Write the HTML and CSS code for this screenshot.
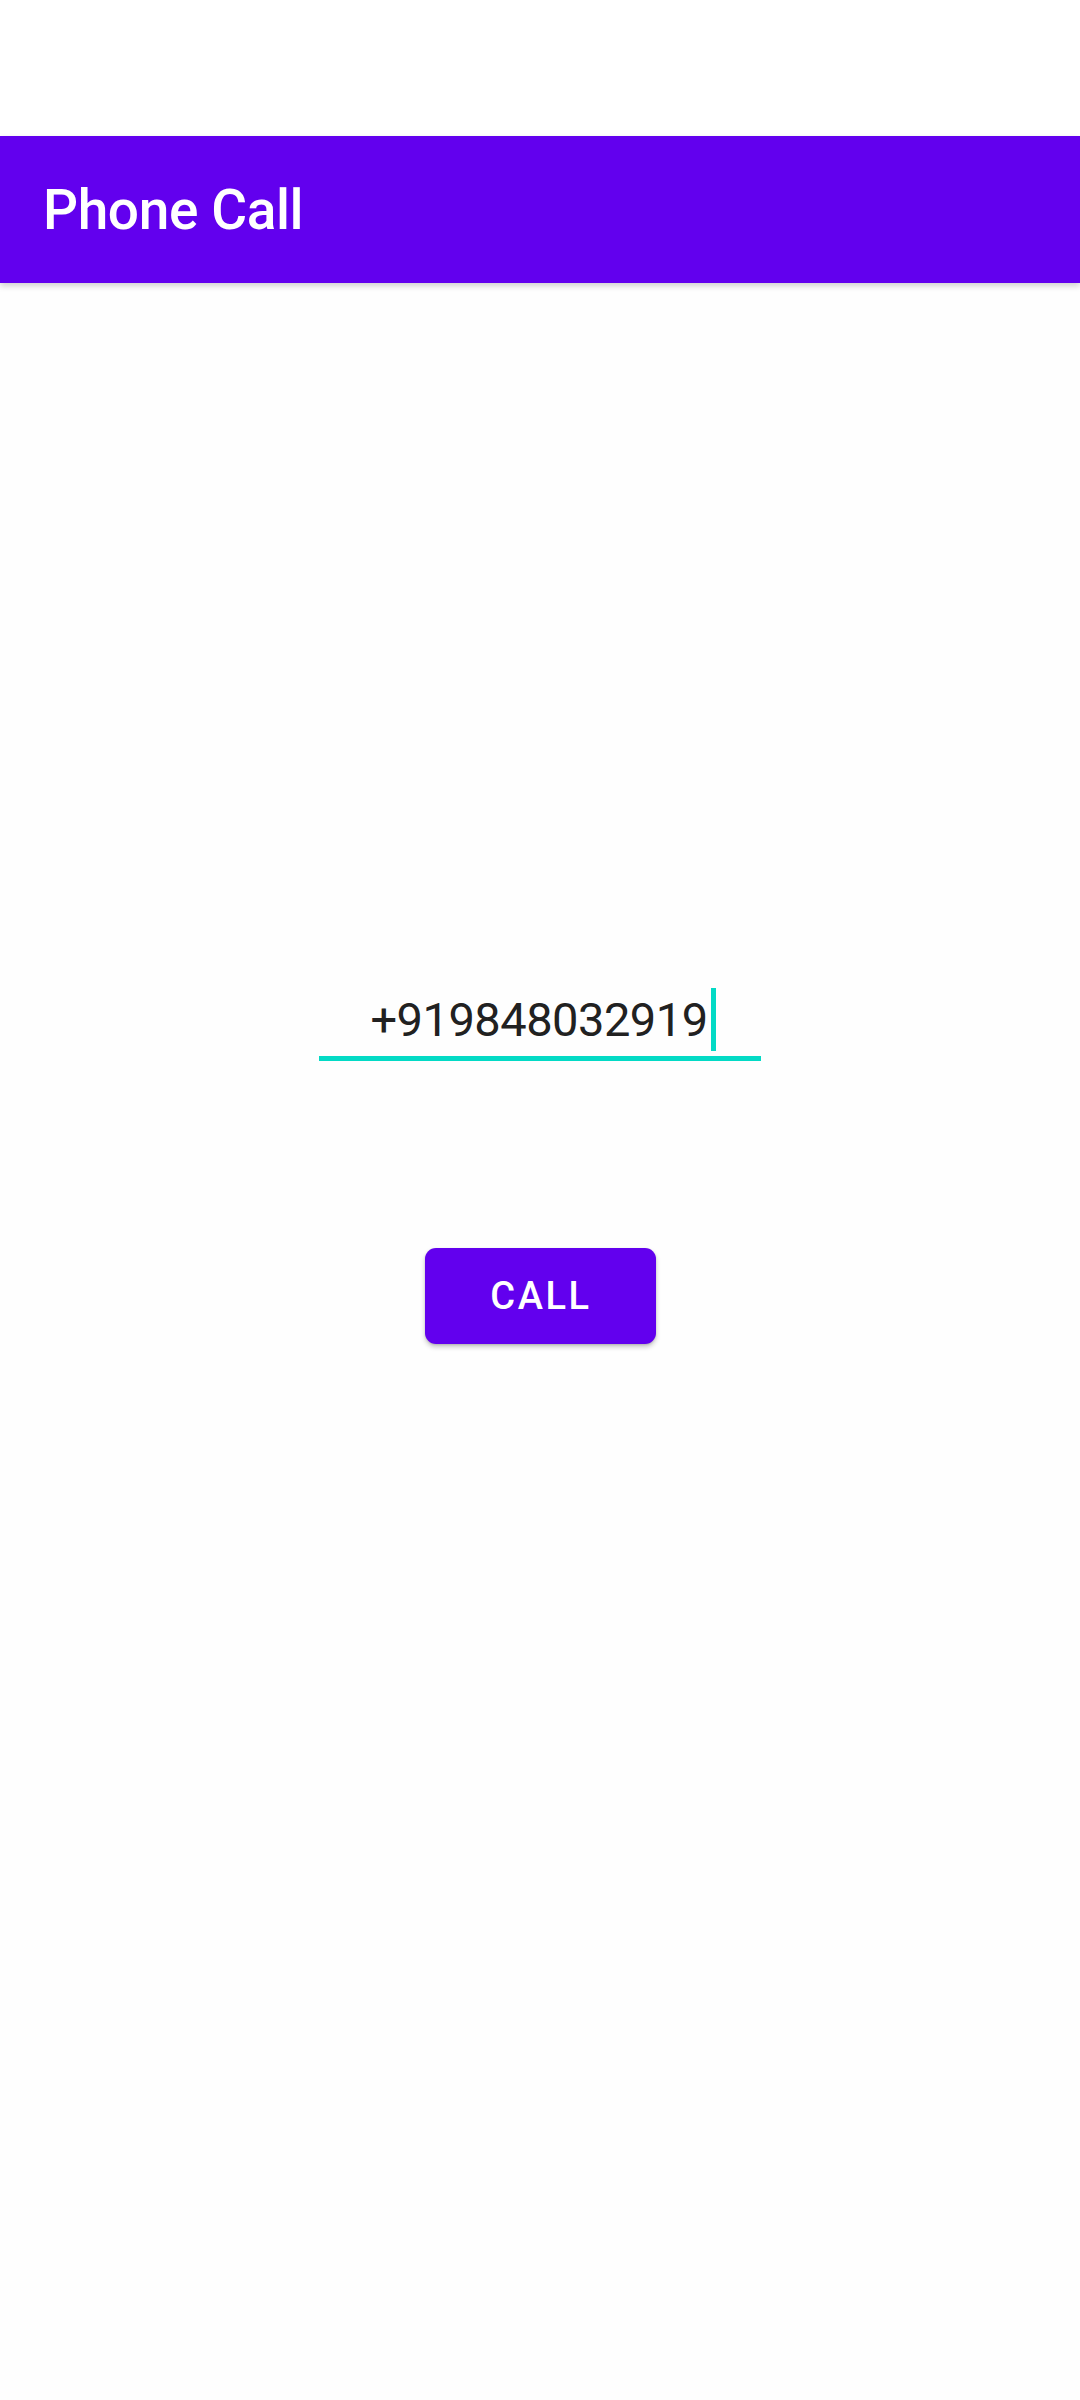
FILE: index.html
```html
<!DOCTYPE html>
<html>
<head>
<meta charset="utf-8">
<link rel="stylesheet" href="styles.css">
</head>
<body>
<div class="status"></div>
<header class="appbar"><span class="title">Phone Call</span></header>
<main class="content">
  <div class="field"><span class="value">+919848032919</span><span class="cursor"></span></div>
  <button class="call">CALL</button>
</main>
</body>
</html>
```
FILE: styles.css
```css
html, body {
  margin: 0;
  padding: 0;
  background: #ffffff;
  font-family: Roboto, "Noto Sans", sans-serif;
}
body {
  width: 1080px;
  height: 2400px;
  overflow: hidden;
  display: flex;
  flex-direction: column;
}
.status {
  height: 136px;
  background: #ffffff;
}
.appbar {
  height: 147px;
  background: #6200ee;
  display: flex;
  align-items: center;
  padding-left: 43px;
  box-shadow: 0 3px 6px rgba(0,0,0,0.18);
  position: relative;
  z-index: 1;
}
.title {
  color: #ffffff;
  font-size: 55px;
  font-weight: 500;
  letter-spacing: -0.4px;
}
.content {
  display: flex;
  flex-direction: column;
  align-items: center;
  flex: 1;
  background: #fefefe;
}
.field {
  margin-top: 705px;
  width: 436px;
  line-height: 64px;
  height: 64px;
  padding: 0 0 4px 6px;
  border-bottom: 5px solid #03dac5;
  text-align: center;
  font-size: 47px;
  letter-spacing: -0.5px;
  color: #212121;
  white-space: nowrap;
}
.cursor {
  display: inline-block;
  width: 5px;
  height: 63px;
  background: #03dac5;
  vertical-align: top;
  margin-left: 3px;
}
.call {
  margin-top: 187px;
  width: 231px;
  height: 96px;
  border: none;
  border-radius: 11px;
  background: #6200ee;
  color: #ffffff;
  font-family: Roboto, "Noto Sans", sans-serif;
  font-size: 38px;
  font-weight: 500;
  letter-spacing: 2.6px;
  padding: 0 0 0 2px;
  box-shadow: 0 3px 5px rgba(0,0,0,0.22), 0 1px 2px rgba(0,0,0,0.12);
}
```
